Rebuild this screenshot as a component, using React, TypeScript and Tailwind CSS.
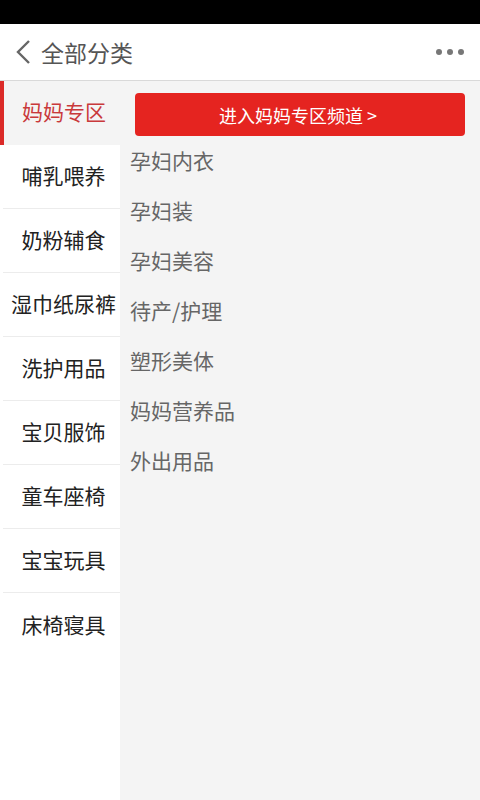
import React from "react";

const left = ["妈妈专区", "哺乳喂养", "奶粉辅食", "湿巾纸尿裤", "洗护用品", "宝贝服饰", "童车座椅", "宝宝玩具", "床椅寝具"];
const subs = ["孕妇内衣", "孕妇装", "孕妇美容", "待产/护理", "塑形美体", "妈妈营养品", "外出用品"];

export default function App() {
  const font = { fontFamily: '"Noto Sans CJK SC", "Noto Sans", sans-serif' };
  return (
    <div className="w-[480px] h-[800px] flex flex-col bg-white overflow-hidden" style={font}>
      <div className="h-[24px] bg-black shrink-0" />
      <div className="h-[57px] shrink-0 flex items-center bg-white border-b border-[#d9d9d9] relative">
        <svg width="16" height="26" viewBox="0 0 16 26" className="ml-[15px]">
          <path d="M14 2 L3 13 L14 24" fill="none" stroke="#666" strokeWidth="2.4" />
        </svg>
        <span className="ml-[10px] text-[23px] text-[#555] leading-none">全部分类</span>
        <div className="ml-auto mr-[16px] flex gap-[5px]">
          <span className="w-[6px] h-[6px] rounded-full bg-[#777]" />
          <span className="w-[6px] h-[6px] rounded-full bg-[#777]" />
          <span className="w-[6px] h-[6px] rounded-full bg-[#777]" />
        </div>
      </div>
      <div className="flex flex-1 min-h-0">
        <div className="w-[120px] shrink-0 bg-white flex flex-col">
          {left.map((t, i) =>
            i === 0 ? (
              <div key={t} className="h-[64px] flex items-center bg-[#f4f4f4] relative">
                <div className="absolute left-0 top-0 bottom-0 w-[4px] bg-[#db2a28]" />
                <span className="w-full text-center text-[21px] text-[#c9393b] leading-none -mt-[4px] pl-[8px]">{t}</span>
              </div>
            ) : (
              <div
                key={t}
                className={
                  i === left.length - 1
                    ? "h-[64px] flex items-center ml-[3px]"
                    : "h-[64px] flex items-center border-b border-[#ececec] ml-[3px]"
                }
              >
                <span className="w-full text-center text-[21px] text-[#222] leading-none whitespace-nowrap pl-[4px] -mt-[2px]">{t}</span>
              </div>
            )
          )}
        </div>
        <div className="flex-1 bg-[#f4f4f4] flex flex-col">
          <div className="mt-[12px] ml-[15px] mr-[15px] h-[43px] rounded-[4px] bg-[#e52420] flex items-center justify-center">
            <span className="text-[18px] text-white leading-none -ml-[4px]">进入妈妈专区频道 &gt;</span>
          </div>
          <div className="flex flex-col ml-[10px] mt-[-1px]">
            {subs.map((s) => (
              <div key={s} className="h-[50px] flex items-center text-[21px] text-[#666] leading-none">
                {s}
              </div>
            ))}
          </div>
        </div>
      </div>
    </div>
  );
}
